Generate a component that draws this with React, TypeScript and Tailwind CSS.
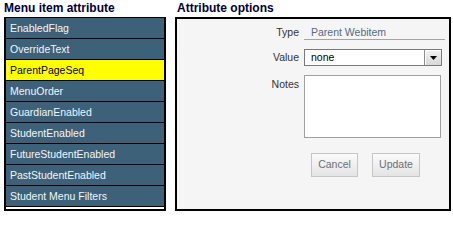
const items = [
  "EnabledFlag",
  "OverrideText",
  "ParentPageSeq",
  "MenuOrder",
  "GuardianEnabled",
  "StudentEnabled",
  "FutureStudentEnabled",
  "PastStudentEnabled",
  "Student Menu Filters",
];

const selected = "ParentPageSeq";

function MenuList() {
  return (
    <div className="ml-[4px] w-[162px]">
      <div className="h-[17px] pt-[1px] text-[12px] font-bold leading-[15px] text-[#000033]">
        Menu item attribute
      </div>
      <ul className="border-x-2 border-t border-b-2 border-black bg-white pb-[2px]">
        {items.map((item) => (
          <li
            key={item}
            className={
              item === selected
                ? "h-[21px] border-b border-black bg-[#ffff00] pl-[4px] pt-[1px] text-[10.5px] leading-[19px] text-black"
                : "h-[21px] border-b border-black bg-[#3c6179] pl-[4px] pt-[1px] text-[10.5px] leading-[19px] text-[#f4f6f8]"
            }
          >
            {item}
          </li>
        ))}
      </ul>
    </div>
  );
}

function AttributeOptions() {
  return (
    <div className="ml-[9px] w-[276px]">
      <div className="h-[17px] pl-[2px] pt-[1px] text-[12px] font-bold leading-[15px] text-[#000033]">
        Attribute options
      </div>
      <div className="h-[194px] border-2 border-black bg-[#f5f5f5] pt-[7px] text-[10.5px]">
        {/* type */}
        <div className="flex">
          <div className="w-[122px] text-right leading-[13px] text-[#333]">Type</div>
          <div className="ml-[5px] w-[141px] border-b border-[#a4a4a4] pl-[7px] leading-[13px] text-[#56688a]">
            Parent Webitem
          </div>
        </div>

        {/* value */}
        <div className="mt-[9px] flex">
          <div className="w-[122px] text-right leading-[17px] text-[#333]">Value</div>
          <div className="ml-[5px] flex h-[17px] w-[138px] border border-[#7a7a7a] bg-white">
            <span className="flex-1 pl-[6px] leading-[15px] text-black">none</span>
            <span className="flex w-[17px] items-center justify-center border-l border-[#8a8a8a] bg-gradient-to-b from-[#f2f2f2] to-[#d8d8d8] shadow-[inset_1px_1px_0_#fff]">
              <svg width="7" height="4" viewBox="0 0 7 4">
                <path d="M0 0h7L3.5 4z" fill="#000" />
              </svg>
            </span>
          </div>
        </div>

        {/* notes */}
        <div className="mt-[9px] flex">
          <div className="w-[122px] pt-[3px] text-right leading-[13px] text-[#333]">Notes</div>
          <div className="ml-[5px] h-[63px] w-[137px] border border-[#a0a0a0] bg-white" />
        </div>

        {/* buttons */}
        <div className="mt-[15px] flex gap-[14px] pl-[134px]">
          <button className="h-[24px] w-[47px] border border-[#c6c6c6] bg-gradient-to-b from-[#fbfbfb] to-[#e4e4e4] text-[10.5px] text-[#6b6f76]">
            Cancel
          </button>
          <button className="h-[24px] w-[48px] border border-[#c6c6c6] bg-gradient-to-b from-[#fbfbfb] to-[#e4e4e4] text-[10.5px] text-[#6b6f76]">
            Update
          </button>
        </div>
      </div>
    </div>
  );
}

export default function App() {
  return (
    <div className="flex h-[216px] w-[453px] bg-white font-['Liberation_Sans',Arial,sans-serif]">
      <MenuList />
      <AttributeOptions />
    </div>
  );
}
